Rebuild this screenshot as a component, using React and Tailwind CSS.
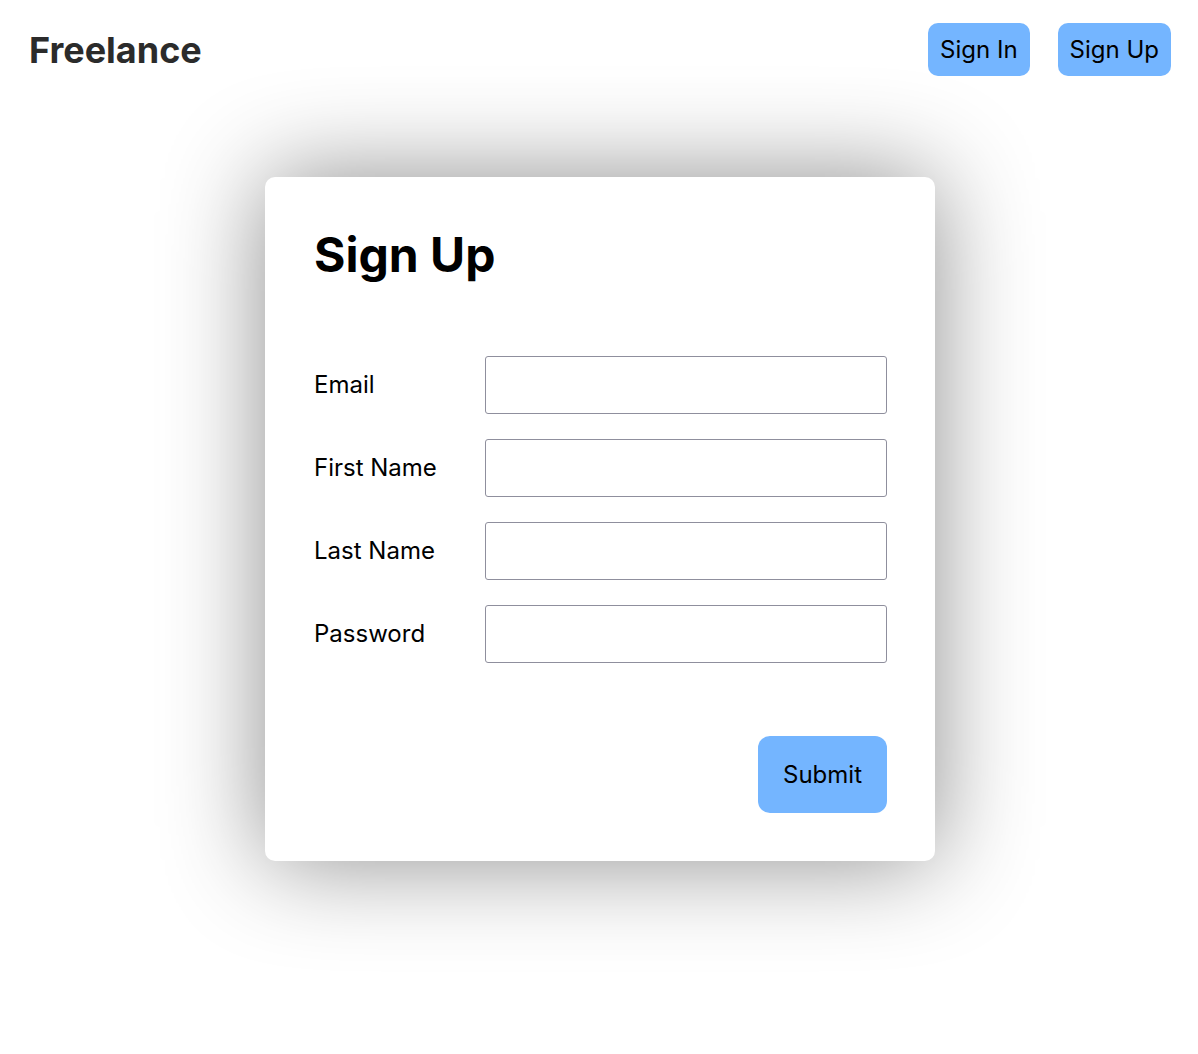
import React from 'react';

function Field({ label, type = 'text' }) {
  return (
    <div className="flex items-center">
      <label className="w-[171px] text-[24px] text-black">{label}</label>
      <input
        type={type}
        className="h-[58px] w-[402px] rounded-[3px] border border-[#8f8f9d] bg-white px-2 text-[24px] outline-none"
      />
    </div>
  );
}

export default function App() {
  return (
    <div className="min-h-screen bg-white font-['Inter','Noto_Sans',sans-serif] text-black">
      <header className="flex items-center justify-between py-[23px] pl-[29px] pr-[27px]">
        <h1 className="text-[36px] font-bold leading-none text-[#2b2b2b]">Freelance</h1>
        <nav className="flex gap-[28px]">
          <button className="rounded-[10px] bg-[#74b5ff] px-3 py-3 text-[24px] leading-[29px]">Sign In</button>
          <button className="rounded-[10px] bg-[#74b5ff] px-3 py-3 text-[24px] leading-[29px]">Sign Up</button>
        </nav>
      </header>

      <main className="mt-[78px] flex justify-center pl-[2px]">
        <div className="w-[670px] rounded-[10px] bg-white pb-[48px] pl-[49px] pr-[48px] pt-[54px] shadow-[0_0_100px_rgba(0,0,0,0.45)]">
          <h2 className="text-[48px] font-bold leading-none">Sign Up</h2>
          <form className="mt-[77px] flex flex-col gap-[25px]">
            <Field label="Email" type="email" />
            <Field label="First Name" />
            <Field label="Last Name" />
            <Field label="Password" type="password" />
            <div className="mt-[48px] flex justify-end">
              <button type="button" className="rounded-[12px] bg-[#74b5ff] px-[25px] py-[24px] text-[24px] leading-[29px]">
                Submit
              </button>
            </div>
          </form>
        </div>
      </main>
    </div>
  );
}
